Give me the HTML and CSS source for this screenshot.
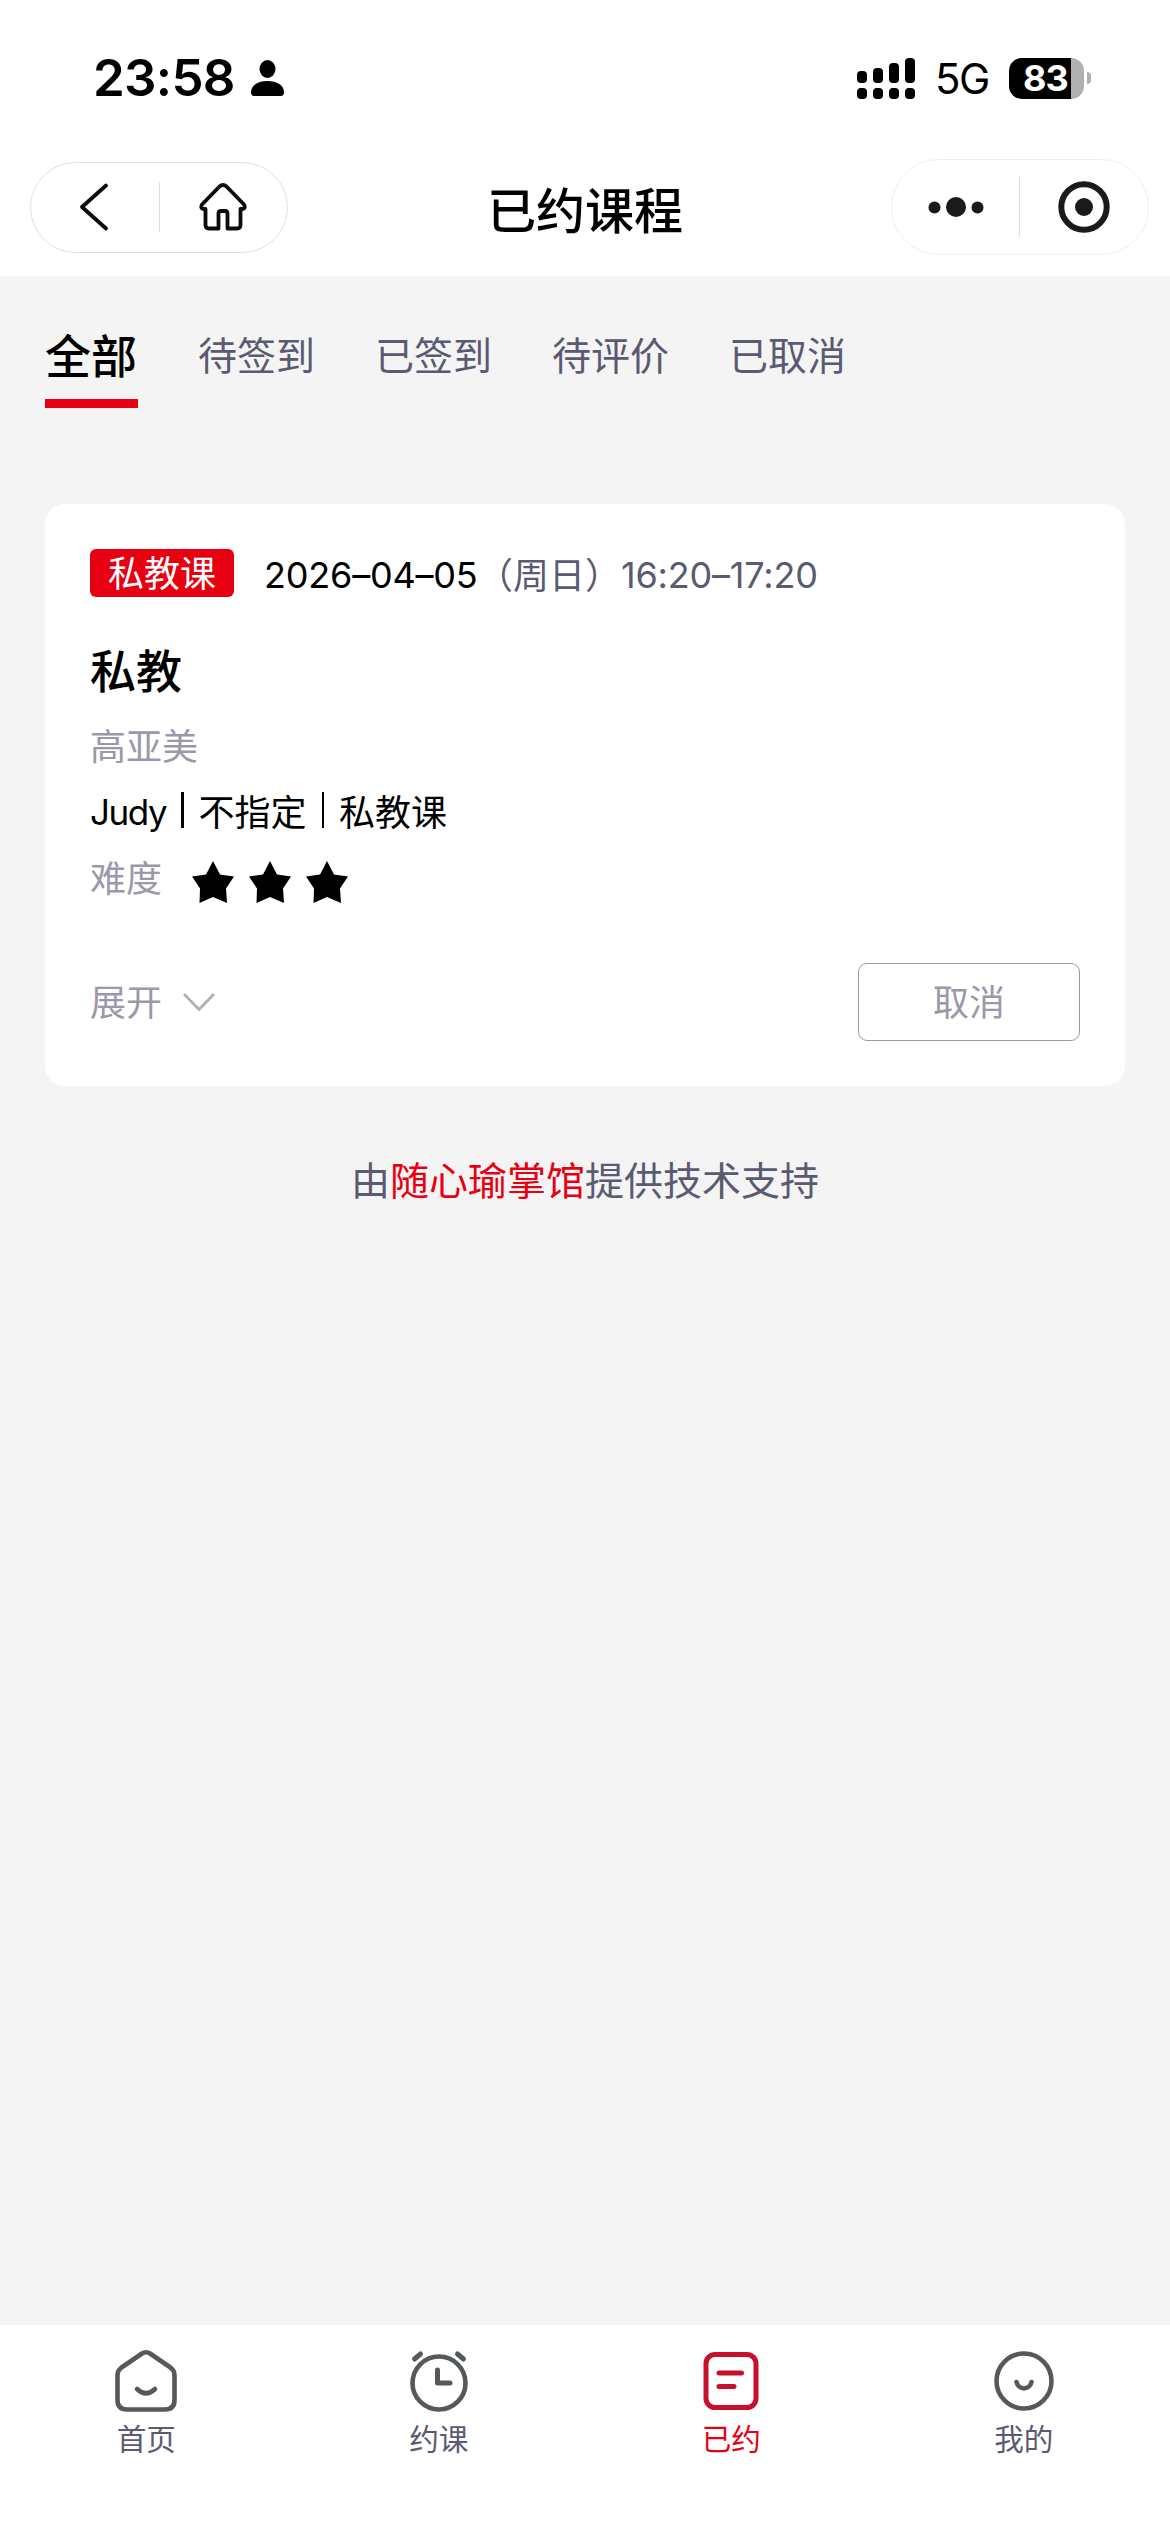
FILE: index.html
```html
<!DOCTYPE html>
<html lang="zh-CN">
<head>
<meta charset="utf-8">
<title>已约课程</title>
<link rel="stylesheet" href="styles.css">
</head>
<body>
<div class="app">
  <header class="header">
    <div class="status">
      <div class="status-left">
        <span class="clock">23:58</span>
        <svg class="person" width="33" height="36" viewBox="0 0 33 36"><ellipse cx="16.5" cy="9" rx="8" ry="9"/><path d="M0 32.5C0 25 7 21 16.5 21S33 25 33 32.5C33 34.800 31.800 36 30 36H3C1.200 36 0 34.800 0 32.500Z"/></svg>
      </div>
      <div class="status-right">
        <svg class="signal" width="58" height="41" viewBox="0 0 58 41"><rect x="0" y="13" width="10" height="12" rx="4"/><rect x="16" y="10" width="10" height="15" rx="4"/><rect x="32" y="5" width="10" height="20" rx="4"/><rect x="48" y="0" width="10" height="25" rx="4"/><rect x="0" y="30" width="10" height="11" rx="4"/><rect x="16" y="30" width="10" height="11" rx="4"/><rect x="32" y="30" width="10" height="11" rx="4"/><rect x="48" y="30" width="10" height="11" rx="4"/></svg>
        <span class="network">5G</span>
        <span class="battery"><span class="battery-level">83</span></span>
        <span class="battery-tip"></span>
      </div>
    </div>
    <nav class="navbar">
      <div class="pill pill-left">
        <span class="pill-cell"><svg class="back" width="32" height="50" viewBox="0 0 32 50"><path d="M27 3.500 3 25 27 46.500"/></svg></span>
        <span class="pill-line"></span>
        <span class="pill-cell"><svg class="house" width="48" height="48" viewBox="0 0 48 48"><path d="M20.500 3.500Q24 .500 27.500 3.500L45 21.500Q47 25.500 43.500 26H41.500V42Q41.500 45.500 38 45.500H28.500V30.500Q28.500 28 26 28H22Q19.500 28 19.500 30.500V45.500H10Q6.500 45.500 6.500 42V26H4.500Q1 25.500 3 21.500Z"/></svg></span>
      </div>
      <h1 class="title">已约课程</h1>
      <div class="pill pill-right">
        <span class="pill-cell"><svg width="56" height="22" viewBox="0 0 56 22"><circle cx="6.500" cy="11.500" r="6"/><circle cx="28" cy="11" r="10"/><circle cx="49.500" cy="11.500" r="6"/></svg></span>
        <span class="pill-line"></span>
        <span class="pill-cell"><svg width="52" height="52" viewBox="0 0 52 52"><circle class="ring" cx="26" cy="26" r="22.700"/><circle cx="26" cy="26" r="9"/></svg></span>
      </div>
    </nav>
  </header>

  <main class="content">
    <div class="tabs">
      <span class="tab active">全部</span>
      <span class="tab">待签到</span>
      <span class="tab">已签到</span>
      <span class="tab">待评价</span>
      <span class="tab">已取消</span>
    </div>

    <section class="card">
      <div class="when">
        <span class="badge">私教课</span>
        <span class="date">2026–04–05</span><span class="weekday">（周日）</span><span class="time">16:20–17:20</span>
      </div>
      <h2 class="course">私教</h2>
      <p class="line muted">高亚美</p>
      <p class="line detail"><span class="latin">Judy</span><i class="bar"></i>不指定<i class="bar"></i>私教课</p>
      <div class="line muted level">
        <span>难度</span>
        <span class="stars">
          <svg width="42" height="42" viewBox="0 0 42 42"><path d="M21 0 28 13.500 42 15.500 34 27.500 35 42 21 36 7.500 42 8 27.500 0 15.500 14 13.500Z"/></svg>
          <svg width="42" height="42" viewBox="0 0 42 42"><path d="M21 0 28 13.500 42 15.500 34 27.500 35 42 21 36 7.500 42 8 27.500 0 15.500 14 13.500Z"/></svg>
          <svg width="42" height="42" viewBox="0 0 42 42"><path d="M21 0 28 13.500 42 15.500 34 27.500 35 42 21 36 7.500 42 8 27.500 0 15.500 14 13.500Z"/></svg>
        </span>
      </div>
      <div class="actions">
        <span class="expand">展开<svg class="chevron" width="32" height="20" viewBox="0 0 32 20"><path d="M1 1 16 16.500 31 1"/></svg></span>
        <button class="cancel">取消</button>
      </div>
    </section>

    <p class="support">由<span class="brand">随心瑜掌馆</span>提供技术支持</p>
  </main>

  <footer class="tabbar">
    <a class="item"><svg width="66" height="66" viewBox="0 0 66 66"><path d="M29 5.500Q33 3 37 5.500L57.500 19.500Q61.500 22.500 61.500 27V52Q61.500 61.500 52 61.500H14Q4.500 61.500 4.500 52V27Q4.500 22.500 8.500 19.500ZM24 41Q33 49.500 42 41"/></svg><span>首页</span></a>
    <a class="item"><svg width="66" height="66" viewBox="0 0 66 66"><circle cx="33" cy="35" r="26.500"/><path class="thick" d="M31.500 22V35H44M8.500 11 14.500 6M51.500 6 57.500 11"/></svg><span>约课</span></a>
    <a class="item current"><svg width="66" height="66" viewBox="0 0 66 66"><rect x="8" y="6.500" width="50" height="53" rx="9"/><path d="M21 25H43.500M21 38.500H36"/></svg><span>已约</span></a>
    <a class="item"><svg width="66" height="66" viewBox="0 0 66 66"><circle cx="33" cy="33" r="27.500"/><path d="M25.500 34C27.500 42.500 38.500 42.500 40.500 34"/></svg><span>我的</span></a>
  </footer>
</div>
</body>
</html>
```
FILE: styles.css
```css
* { box-sizing: border-box; }
body { margin: 0; background: #f4f4f4; color: #000; font-family: "Noto Sans CJK SC", sans-serif; }
h1, h2, p { margin: 0; font-weight: 500; }
p { font-weight: 400; }
svg { display: block; flex: none; }
.app { width: 1170px; height: 2532px; display: flex; flex-direction: column; }

.header { height: 276px; background: #fff; }
.status { height: 156px; padding: 0 79px 0 93px; display: flex; justify-content: space-between; align-items: center; font-family: Inter, sans-serif; }
.status-left, .status-right { display: flex; align-items: center; }
.clock { font-size: 51px; font-weight: 600; letter-spacing: -.7px; line-height: 60px; }
.person { margin-left: 16px; }
.network { margin-left: 20px; width: 74px; font-size: 42px; line-height: 50px; padding-top: 2px; letter-spacing: -1.500px; }
.battery { width: 75px; height: 41px; border-radius: 13px; background: linear-gradient(90deg, #000 62px, #b0b0b0 62px); }
.battery-level { display: block; padding-left: 14px; color: #fff; font-size: 36px; font-weight: 700; line-height: 40px; letter-spacing: -1px; }
.battery-tip { width: 4px; height: 12px; margin-left: 3px; background: #b0b0b0; border-radius: 0 4px 4px 0; }

.navbar { height: 102px; padding: 0 21px 0 30px; display: flex; justify-content: space-between; align-items: center; }
.pill { width: 258px; display: flex; align-items: center; border-radius: 48px; border: 1px solid #e0e0e0; }
.pill-left { height: 91px; }
.pill-right { height: 96px; border-color: #eee; fill: #1a1a1a; }
.pill-cell { flex: 1; display: flex; justify-content: center; }
.pill-line { width: 1px; height: 50px; background: #ddd; }
.pill-right .pill-line { height: 60px; }
.back, .house { fill: none; stroke: #0c0c0c; stroke-width: 3.800; stroke-linecap: round; stroke-linejoin: round; }
.ring { fill: none; stroke: #1a1a1a; stroke-width: 6; }
.title { margin-right: 9px; font-size: 49px; line-height: 60px; padding-top: 1px; }

.content { flex: 1; padding: 0 45px; }
.tabs { height: 228px; padding-top: 43px; display: flex; align-items: flex-start; gap: 60px; color: #5a5a72; font-size: 39px; line-height: 68px; }
.tab { height: 89px; }
.tab.active { width: 93px; color: #000; font-size: 46px; font-weight: 500; border-bottom: 9px solid #e60012; }

.card { height: 582px; padding: 45px; background: #fff; border-radius: 20px; font-size: 36px; }
.when { height: 48px; display: flex; align-items: center; color: #5a5a72; white-space: nowrap; }
.badge { width: 144px; height: 48px; margin-right: 30px; border-radius: 6px; background: #e60012; color: #fff; text-align: center; line-height: 44px; font-size: 36px; }
.date, .time { font-family: Inter, sans-serif; line-height: 48px; padding-top: 4px; letter-spacing: -.200px; }
.date { color: #000; width: 213px; letter-spacing: -.200px; }
.weekday { line-height: 48px; width: 144px; }
.course { margin-top: 41px; font-size: 46px; line-height: 60px; }
.line { height: 60px; margin-top: 6px; line-height: 60px; }
.course + .line { margin-top: 16px; }
.muted, .expand { color: #9a98aa; }
.detail { display: flex; align-items: center; }
.latin { width: 76px; font-family: Inter, sans-serif; font-size: 35px; letter-spacing: -1.400px; padding-top: 3px; }
.bar { width: 2.500px; height: 36px; margin: 0 15px; background: #000; }
.level { display: flex; align-items: center; }
.stars { display: flex; gap: 15px; margin: 12px 0 0 30px; fill: #000; }
.actions { height: 78px; margin-top: 57px; display: flex; justify-content: space-between; align-items: center; }
.expand { display: flex; align-items: center; line-height: 60px; padding-bottom: 4px; }
.chevron { margin: 6px 0 0 21px; fill: none; stroke: #b0b0b0; stroke-width: 2.800; }
.cancel { width: 222px; height: 78px; padding: 0 0 4px; border: 1px solid #9a98aa; border-radius: 9px; background: #fff; color: #9a98aa; font: 36px "Noto Sans CJK SC", sans-serif; }

.support { margin-top: 62px; color: #5a5a72; font-size: 39px; line-height: 60px; text-align: center; }
.brand { color: #e60012; }

.tabbar { height: 207px; background: #fff; display: flex; padding-top: 23px; }
.item { flex: 1; display: flex; flex-direction: column; align-items: center; color: #5a5a72; font-size: 29.600px; line-height: 40px; }
.item svg { fill: none; stroke: #55595c; stroke-width: 4.600; stroke-linecap: round; stroke-linejoin: round; margin-bottom: 4px; }
.item .thick { stroke-width: 5; }
.item.current { color: #e60012; }
.item.current svg { stroke: #c8102e; stroke-width: 5; }
```
